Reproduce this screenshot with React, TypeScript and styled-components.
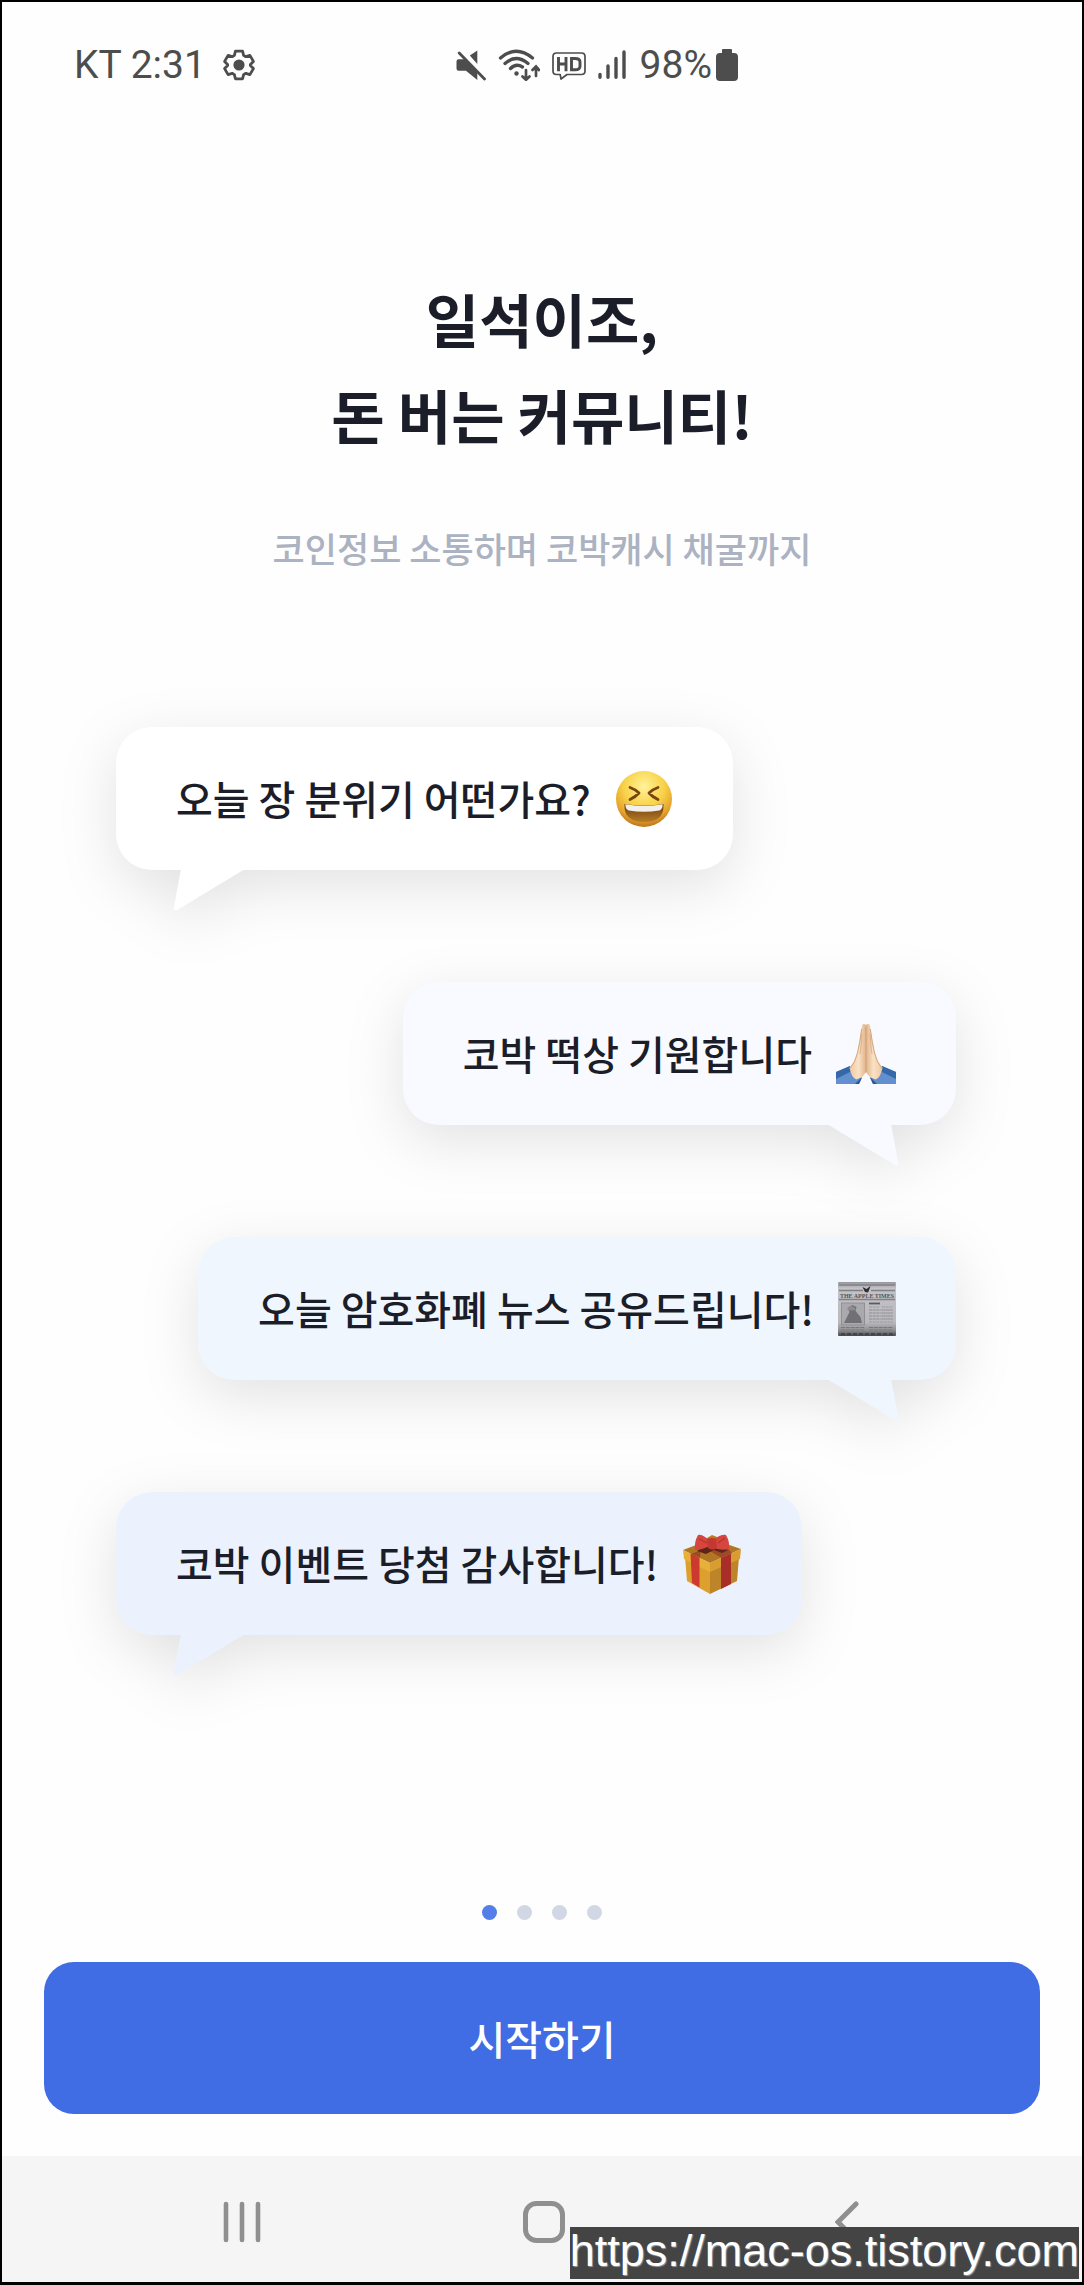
import React from "react";
import styled, { createGlobalStyle } from "styled-components";

const GlobalStyle = createGlobalStyle`
  *, *::before, *::after { box-sizing: border-box; }
  body { margin: 0; background: #fefefe; }
  button { margin: 0; padding: 0; border: 0; background: none; cursor: pointer; }
`;

const ink = "#1b1e28";
const statusInk = "#4d4d4d";

const Screen = styled.div`
  position: relative;
  display: flex;
  flex-direction: column;
  min-height: 100vh;
  border: 2px solid #000;
  border-bottom-width: 3px;
  background: #fefefe;
  color: ${ink};
  font-family: "Noto Sans CJK KR", "Noto Sans", sans-serif;
`;

const StatusBar = styled.header`
  display: grid;
  grid-template-columns: 42% 1fr;
  align-items: center;
  padding: 40px 0;
  color: ${statusInk};
  font-family: Roboto, sans-serif;
  font-size: 39px;
  line-height: 46px;
`;

const StatusGroup = styled.div<{ $inset?: boolean; $gap: number }>`
  display: flex;
  align-items: center;
  gap: ${(p) => p.$gap}px;
  padding-left: ${(p) => (p.$inset ? 72 : 0)}px;

  svg { display: block; flex: none; }
`;

const Battery = styled.div`
  display: flex;
  align-items: center;
  gap: 4px;
  padding-left: 2px;
`;

const Main = styled.main`
  display: flex;
  flex: 1;
  flex-direction: column;
`;

const Intro = styled.section`
  padding: 142px 40px 0;
  text-align: center;
`;

const Title = styled.h1`
  margin: 0;
  font-size: 58px;
  font-weight: 700;
  line-height: 96px;
`;

const Subtitle = styled.p`
  margin: 62px 0 0;
  color: #abb2c1;
  font-size: 35px;
  font-weight: 500;
  line-height: 48px;
`;

const Chat = styled.ul`
  display: flex;
  flex-direction: column;
  gap: 112px;
  margin: 0;
  padding: 155px 126px 0 114px;
  list-style: none;
`;

type Side = "left" | "right";

const Bubble = styled.li<{ $side: Side; $fill: string }>`
  position: relative;
  display: flex;
  align-items: center;
  align-self: ${(p) => (p.$side === "left" ? "flex-start" : "flex-end")};
  gap: 24px;
  height: 143px;
  padding: 0 60px;
  border-radius: 36px;
  background: ${(p) => p.$fill};
  color: ${ink};
  font-size: 40px;
  font-weight: 500;
  line-height: 56px;
  filter: drop-shadow(0 16px 28px rgba(0, 0, 0, 0.11));

  > svg { flex: none; }
`;

const Message = styled.span`
  padding-bottom: 2px;
`;

const Tail = styled.svg<{ $side: Side }>`
  position: absolute;
  top: 100%;
  ${(p) => p.$side}: 56px;
  width: 74px;
  height: 42px;
  margin-top: -1px;
  transform: ${(p) => (p.$side === "right" ? "scaleX(-1)" : "none")};
`;

const Footer = styled.footer`
  display: flex;
  flex-direction: column;
  gap: 42px;
  margin-top: auto;
  padding: 0 42px 42px;
`;

const Pager = styled.div`
  display: flex;
  justify-content: center;
  gap: 20px;
`;

const Dot = styled.button<{ $active: boolean }>`
  width: 15px;
  height: 15px;
  border-radius: 50%;
  && { background: ${(p) => (p.$active ? "#557fe8" : "#d1d7e5")}; }
`;

const StartButton = styled.button`
  width: 100%;
  height: 152px;
  border-radius: 30px;
  && { background: #406ce4; }
  color: #fff;
  font-family: inherit;
  font-size: 40px;
  font-weight: 500;
  line-height: 56px;
`;

const NavBar = styled.nav`
  display: grid;
  grid-template-columns: repeat(3, 1fr);
  height: 126px;
  padding: 0 84px 0 89px;
  background: #f5f5f5;
`;

const NavButton = styled.button`
  display: flex;
  align-items: center;
  justify-content: center;
  padding-top: 6px;
`;

const Watermark = styled.a`
  position: absolute;
  right: 3px;
  bottom: 3px;
  padding-bottom: 4px;
  background: #444;
  color: #fff;
  font-family: "Liberation Sans", Arial, sans-serif;
  font-size: 45px;
  line-height: 48px;
  text-decoration: none;
  text-shadow: 1px 1px 1px #999;
`;

const GearIcon = () => (
  <svg width="32" height="32" viewBox="0 0 32 32" aria-hidden="true">
    <path
      d="M12.4 2.200h7.200l1 4.200 2.200 1.300 4.100-1.300 3.500 6-3 3v1.200l3 3-3.500 6-4.100-1.300-2.200 1.300-1 4.200h-7.200l-1-4.200-2.200-1.300-4.100 1.300-3.500-6 3-3v-1.200l-3-3 3.500-6 4.100 1.300 2.200-1.300z"
      fill="none"
      stroke={statusInk}
      strokeWidth="2.800"
      strokeLinejoin="round"
    />
    <circle cx="16" cy="16" r="5.600" fill={statusInk} />
  </svg>
);

const MuteIcon = () => (
  <svg width="30" height="32" viewBox="0 0 30 32" aria-hidden="true" fill={statusInk}>
    <path d="M13.800 6.500 21.300 1.500V15z" />
    <path d="M2.500 10.300H8.500L21.300 23v8L10 21.700H2.500Q.5 21.700.5 19.500v-7Q.5 10.300 2.500 10.300z" />
    <path d="M3.200 4 28.500 30" stroke={statusInk} strokeWidth="2.800" strokeLinecap="round" />
  </svg>
);

const WifiIcon = () => (
  <svg width="42" height="32" viewBox="0 0 42 32" aria-hidden="true" fill="none" stroke={statusInk} strokeLinecap="round">
    <path d="M2.500 9Q18-4.500 34.500 9M7 14.500Q18 4.500 30 14.500M12.500 19.500Q18 14 24.500 18" strokeWidth="3.300" />
    <circle cx="18.500" cy="24.500" r="2.200" fill={statusInk} stroke="none" />
    <path d="M28 21v9.500M24.500 27.500l3.500 3.300 3.500-3.300M38 27v-9M34.500 21l3.500-3.500 3 3.500" strokeWidth="2.700" />
  </svg>
);

const HdIcon = () => (
  <svg width="34" height="30" viewBox="0 0 34 30" aria-hidden="true" fill="none" stroke={statusInk}>
    <path d="M4.500 3h25q3.500 0 3.500 3.500v14.500q0 3.500-3.500 3.500H15L9 29l-.8-4.500H4.500Q1 24.500 1 21V6.500Q1 3 4.500 3z" strokeWidth="1.700" strokeLinejoin="round" />
    <path d="M6.500 7v14.300M14 7v14.300M6.500 14H14M19.500 8.500v11.300h3.500q5 0 5-3.500v-4.300q0-3.500-5-3.500z" strokeWidth="2.900" />
  </svg>
);

const SignalIcon = () => (
  <svg width="28" height="30" viewBox="0 0 28 30" aria-hidden="true" stroke={statusInk} strokeWidth="3.400" strokeLinecap="round">
    <path d="M2 24.500v2.800M10 16v11.300M18 8.500v18.800M26 2v25.300" />
  </svg>
);

const BatteryIcon = () => (
  <svg width="22" height="34" viewBox="0 0 22 34" aria-hidden="true" fill={statusInk}>
    <path d="M7 1h8q1 0 1 1v3h2q4 0 4 4v20q0 4-4 4H4q-4 0-4-4V9q0-4 4-4h2V2q0-1 1-1z" />
  </svg>
);

const LaughingFace = () => (
  <svg width="58" height="58" viewBox="-1 0 58 58" role="img" aria-label="웃는 얼굴">
    <defs>
      <radialGradient id="face" cx=".5" cy=".28" r=".72">
        <stop offset="0" stopColor="#fff39a" />
        <stop offset=".5" stopColor="#f8d248" />
        <stop offset=".82" stopColor="#e5a22d" />
        <stop offset="1" stopColor="#bd741a" />
      </radialGradient>
      <linearGradient id="mouth" x1="0" y1="0" x2="0" y2="1">
        <stop offset="0" stopColor="#6d3c0c" />
        <stop offset="1" stopColor="#b67d27" />
      </linearGradient>
    </defs>
    <circle cx="28" cy="29" r="28" fill="url(#face)" />
    <path d="M14 17.500q6 2.200 9 5.500-3 3.500-9 6.500M42 17.500q-6 2.200-9 5.500 3 3.500 9 6.500" fill="none" stroke="#7b460e" strokeWidth="2.800" strokeLinecap="round" strokeLinejoin="round" />
    <path d="M8.500 34Q28 37 47.500 34q1 18-19.500 18T8.500 34z" fill="url(#mouth)" />
    <path d="M9.300 34.200Q28 37.500 46.700 34.200q0 5-3.500 6.300Q28 43 12.800 40.500q-3.500-1.300-3.500-6.300z" fill="#f3efec" />
  </svg>
);

const FoldedHands = () => (
  <svg width="60" height="60" viewBox="0 0 60 60" role="img" aria-label="모은 두 손">
    <defs>
      <linearGradient id="hand" x1="0" y1="0" x2="1" y2="0">
        <stop offset="0" stopColor="#efc9a4" />
        <stop offset=".55" stopColor="#f9e2c4" />
        <stop offset="1" stopColor="#dfb188" />
      </linearGradient>
      <g id="half">
        <path d="M0 48 14 42 26 54l-3 6H0z" fill="#638fce" />
        <path d="M0 48 14 42l2 5L0 55z" fill="#3468a8" />
        <path d="M23 60l3-7-4 4-3 3z" fill="#2d568c" />
        <path d="M26 2q0-2 2-2t2.300 2v46q-2 2-4 5l-6 2.500q-5-2-6.800-12 6-7 7.800-16Q24 14 26 2z" fill="url(#hand)" />
        <path d="M25.700 5Q24 18 21.500 29q-2 9-7.500 15.500" fill="none" stroke="#d7a57a" strokeWidth="1" />
      </g>
    </defs>
    <use href="#half" />
    <use href="#half" transform="matrix(-1 0 0 1 60 0)" />
    <path d="M30 3v45M26 10q-1 14-2 20M34 10q1 14 2 20" fill="none" stroke="#c48c62" strokeWidth=".8" opacity=".6" />
  </svg>
);

const columnLines = [28, 31, 34, 37, 40];

const Newspaper = () => (
  <svg width="58" height="54" viewBox="0 0 58 54" role="img" aria-label="신문">
    <defs>
      <linearGradient id="paper" x1="0" y1="0" x2="0" y2="1">
        <stop offset="0" stopColor="#96969b" />
        <stop offset=".12" stopColor="#c3c3c7" />
        <stop offset=".75" stopColor="#b9b9bd" />
        <stop offset=".9" stopColor="#8d8d91" />
        <stop offset="1" stopColor="#47474a" />
      </linearGradient>
    </defs>
    <rect width="58" height="54" rx="1" fill="url(#paper)" />
    <path d="M1 3h56M1 8.500h24M33 8.500h24M1 17.500h56" stroke="#808085" strokeWidth="1.400" />
    <path d="M24.500 5l4 2 4-3-1 3-1.500 3.500-3-.5z" fill="#2e2e30" />
    <text x="29" y="15.500" textAnchor="middle" fontFamily="Liberation Serif, serif" fontSize="6" fontWeight="700" fill="#545458">
      THE APPLE TIMES
    </text>
    <rect x="3.500" y="21" width="23" height="22" fill="#aaaaae" stroke="#8f8f94" />
    <path d="M6 41l5.500-11-2-4 5-3 4 2-1 4 5 6 1.500 6z" fill="#717175" />
    <path d="M9 27q4-6 9 0-4 3-9 0z" fill="#8b8b90" />
    <path d="M31 21.500h11" stroke="#5c5c60" strokeWidth="1.800" />
    {columnLines.map((y) => (
      <path key={y} d={`M31 ${y - 3}h11M44 ${y - 3}h11M31 ${y}h24`} stroke="#9c9ca1" strokeWidth="1" strokeDasharray="3 .7" />
    ))}
    <path d="M3 45.500h24M31 45.500h24M3 48h24M31 48h24" stroke="#77777c" strokeWidth="1" strokeDasharray="4 .8" />
    <path d="M3 52h52" stroke="#3c3c3f" strokeWidth="1.500" strokeDasharray="4 2" />
  </svg>
);

const Gift = () => (
  <svg width="60" height="60" viewBox="0 0 60 60" role="img" aria-label="선물">
    <path d="M3 23l25 12v25L5 47z" fill="#dda02f" />
    <path d="M28 35l29-12-2 24-27 13z" fill="#bd842a" />
    <path d="M1 16l29-11 29 10-31 14z" fill="#b17621" />
    <path d="M1 16l27 13v9L2 25z" fill="#e9b037" />
    <path d="M28 29l31-14-1 10-30 13z" fill="#d89c2f" />
    <path d="M8.500 19.500l9 4.500v29.500L10 49z" fill="#cb392f" />
    <path d="M39 24l10-4.500V50l-10 5z" fill="#a92e27" />
    <path d="M9 20L40 8l10 11-10 5L19 12l-1 12z" fill="#9d4b25" />
    <path d="M21 6.500L30 1l10 4-8 5z" fill="#ba7d20" />
    <path d="M15 17q8-7 17-2 7-3 14 1l-6 3-8-3-8 4z" fill="#5d2518" />
    <path d="M27 6Q20 0 16 1q-4 7-3 15 7 0 14-4zM31 6q8-6 13-5 4 7 3 14-9 2-17-2z" fill="#d5463e" />
    <path d="M25 5q5-2 9 0l1 9q-5 3-9 0z" fill="#c43831" />
    <path d="M17 5l8 4M43 4l-7 5" stroke="#b9322d" strokeWidth="1.200" fill="none" />
  </svg>
);

const messages: { text: string; side: Side; fill: string; Emoji: React.FC }[] = [
  { text: "오늘 장 분위기 어떤가요?", side: "left", fill: "#ffffff", Emoji: LaughingFace },
  { text: "코박 떡상 기원합니다", side: "right", fill: "#f8faff", Emoji: FoldedHands },
  { text: "오늘 암호화폐 뉴스 공유드립니다!", side: "right", fill: "#f0f6fe", Emoji: Newspaper },
  { text: "코박 이벤트 당첨 감사합니다!", side: "left", fill: "#ebf2fe", Emoji: Gift },
];

export default function App() {
  const [page, setPage] = React.useState(0);

  return (
    <Screen>
      <GlobalStyle />
      <StatusBar>
        <StatusGroup $inset $gap={17}>
          <span>KT 2:31</span>
          <GearIcon />
        </StatusGroup>
        <StatusGroup $gap={12}>
          <MuteIcon />
          <WifiIcon />
          <HdIcon />
          <SignalIcon />
          <Battery>
            <span>98%</span>
            <BatteryIcon />
          </Battery>
        </StatusGroup>
      </StatusBar>
      <Main>
        <Intro>
          <Title>
            일석이조,
            <br />
            돈 버는 커뮤니티!
          </Title>
          <Subtitle>코인정보 소통하며 코박캐시 채굴까지</Subtitle>
        </Intro>
        <Chat>
          {messages.map(({ text, side, fill, Emoji }) => (
            <Bubble key={text} $side={side} $fill={fill}>
              <Message>{text}</Message>
              <Emoji />
              <Tail $side={side} viewBox="0 0 74 42" aria-hidden="true">
                <path d="M9 0H73L5 41Q1 42 2 38z" fill={fill} />
              </Tail>
            </Bubble>
          ))}
        </Chat>
        <Footer>
          <Pager>
            {messages.map((m, i) => (
              <Dot
                key={m.text}
                type="button"
                $active={i === page}
                aria-label={`${i + 1} 페이지`}
                aria-current={i === page}
                onClick={() => setPage(i)}
              />
            ))}
          </Pager>
          <StartButton type="button">시작하기</StartButton>
        </Footer>
      </Main>
      <NavBar>
        <NavButton type="button" aria-label="최근 앱">
          <svg width="38" height="42" viewBox="0 0 38 42" stroke="#8f8f8f" strokeWidth="4.600" strokeLinecap="round">
            <path d="M3 3v36M19 3v36M35 3v36" />
          </svg>
        </NavButton>
        <NavButton type="button" aria-label="홈">
          <svg width="42" height="42" viewBox="0 0 42 42" fill="none" stroke="#8f8f8f" strokeWidth="5">
            <rect x="2.500" y="2.500" width="37" height="37" rx="11" />
          </svg>
        </NavButton>
        <NavButton type="button" aria-label="뒤로">
          <svg width="24" height="42" viewBox="0 0 24 42" fill="none" stroke="#8f8f8f" strokeWidth="5" strokeLinecap="round">
            <path d="M21 3L3 21l18 18" />
          </svg>
        </NavButton>
      </NavBar>
      <Watermark href="https://mac-os.tistory.com">https://mac-os.tistory.com</Watermark>
    </Screen>
  );
}
